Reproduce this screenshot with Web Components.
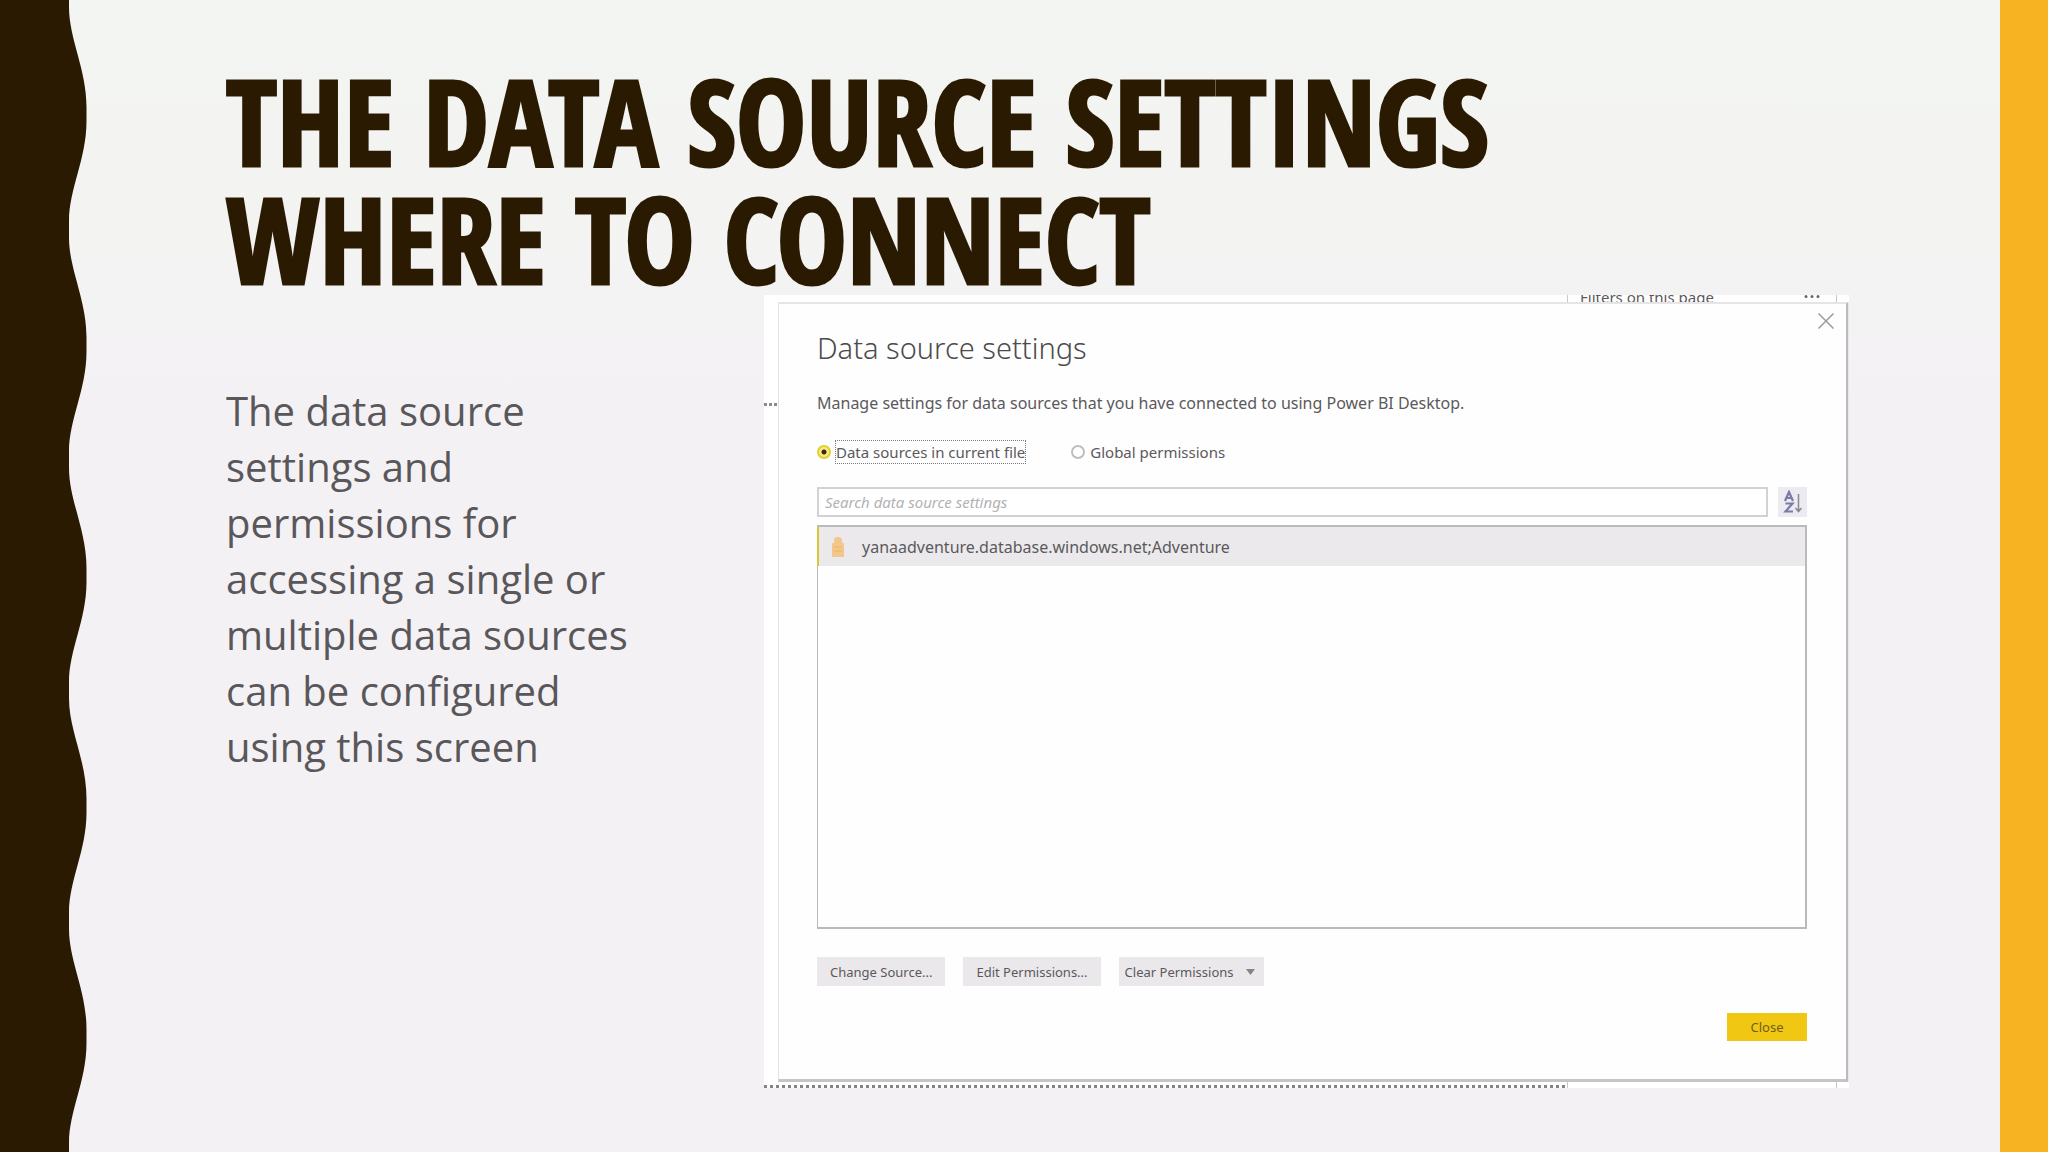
<!DOCTYPE html>
<html lang="en">
<head>
<meta charset="utf-8">
<title>The data source settings</title>
<style>
  body { margin: 0; font-family: "Open Sans", "Noto Sans", sans-serif; }
</style>
</head>
<body>
<slide-page>
  <slide-title slot="title">THE DATA SOURCE SETTINGS<br>WHERE TO CONNECT</slide-title>
  <slide-text slot="text">The data source settings and permissions for accessing a single or multiple data sources can be configured using this screen</slide-text>
  <app-backdrop slot="figure">
    <settings-dialog heading="Data source settings">
      <span slot="description">Manage settings for data sources that you have connected to using Power BI Desktop.</span>
      <scope-choice slot="scope"></scope-choice>
      <source-search slot="search"></source-search>
      <source-list slot="list">
        <source-item>yanaadventure.database.windows.net;Adventure</source-item>
      </source-list>
      <dialog-button slot="actions">Change Source...</dialog-button>
      <dialog-button slot="actions">Edit Permissions...</dialog-button>
      <dialog-select slot="actions" label="Clear Permissions"></dialog-select>
      <dialog-button slot="footer" primary>Close</dialog-button>
    </settings-dialog>
  </app-backdrop>
</slide-page>

<script>
const define = (name, html, setup) => {
  const template = document.createElement('template');
  template.innerHTML = html;
  customElements.define(name, class extends HTMLElement {
    constructor() {
      super();
      this.attachShadow({ mode: 'open' }).append(template.content.cloneNode(true));
    }
    connectedCallback() {
      if (setup) setup(this, this.shadowRoot);
    }
  });
};

define('wave-edge', `
  <style>
    :host { display: block; width: 87px; flex: none; }
    svg { display: block; width: 100%; height: 100%; }
  </style>
  <svg viewBox="0 0 87 1152" preserveAspectRatio="none" aria-hidden="true"><path fill="#2b1a02"/></svg>`,
  (host, root) => {
    const period = 230.5;
    let d = 'M0 0H69';
    for (let y = -1; y < 1152; y += period) {
      d += `L69 ${y + 8}C69 ${y + 40} 86.500 ${y + 70} 86.500 ${y + 108}V${y + 122}C86.500 ${y + 160} 69 ${y + 190} 69 ${y + 222}V${y + period}`;
    }
    root.querySelector('path').setAttribute('d', d + 'H0Z');
  });

define('slide-page', `
  <style>
    :host { display: flex; min-height: 100vh; background: linear-gradient(#f3f5f2, #f3f4f2 18%, #f4f1f5 36%); }
    main { flex: 1; padding: 62px 151px 0 139px; }
    .columns { display: grid; grid-template-columns: 538px 1fr; align-items: start; margin-top: -3px; }
    .bar { width: 48px; flex: none; background: #f8b323; }
  </style>
  <wave-edge></wave-edge>
  <main>
    <slot name="title"></slot>
    <div class="columns"><slot name="text"></slot><slot name="figure"></slot></div>
  </main>
  <div class="bar"></div>`);

define('slide-title', `
  <style>
    :host { display: block; }
    h1 { margin: 0; font: 800 118px/118px "Open Sans Condensed", "Roboto Condensed", "Open Sans", sans-serif; font-variant-ligatures: none; color: #2b1a02; -webkit-text-stroke: 3px #2b1a02; white-space: nowrap; }
  </style>
  <h1><slot></slot></h1>`);

define('slide-text', `
  <style>
    :host { display: block; max-width: 430px; padding-top: 88px; }
    p { margin: 0; font-size: 40px; line-height: 56px; color: #59575a; }
  </style>
  <p><slot></slot></p>`);

define('app-backdrop', `
  <style>
    :host { display: block; background: #fff; font-family: "Noto Sans", "Open Sans", sans-serif; color: #5b595c; }
    .top { display: flex; height: 7px; overflow: hidden; padding: 0 12px 0 803px; }
    .pane { flex: 1; display: flex; justify-content: space-between; border: solid #c9c7ca; border-width: 0 1px; padding: 0 16px 0 12px; }
    .pane span { font-size: 15px; line-height: 20px; margin-top: -8px; }
    .pane svg { flex: none; }
    .middle { display: grid; grid-template-columns: 14px 1fr 1px; }
    .left { padding-top: 101px; }
    .left i { display: block; height: 3px; background: repeating-linear-gradient(90deg, #8b898c 0 3px, transparent 3px 5px); }
    .right { background: #e9e7ea; }
    .bottom { display: flex; height: 6px; align-items: end; padding-right: 12px; }
    .dots { width: 803px; height: 3px; background: repeating-linear-gradient(90deg, #858386 0 3px, transparent 3px 6px); }
    .tail { flex: 1; height: 6px; border: solid #c9c7ca; border-width: 0 1px; }
  </style>
  <div class="top"><div class="pane"><span>Filters on this page</span>
    <svg width="16" height="4" fill="#6b696c" aria-hidden="true"><circle cx="2" cy="1.500" r="1.500"/><circle cx="8" cy="1.500" r="1.500"/><circle cx="14" cy="1.500" r="1.500"/></svg></div></div>
  <div class="middle"><div class="left"><i></i></div><slot></slot><div class="right"></div></div>
  <div class="bottom"><div class="dots"></div><div class="tail"></div></div>`);

define('settings-dialog', `
  <style>
    :host { display: block; background: #fefefe; border: solid; border-width: 2px 2px 3px 1px; border-color: #e6e4e7 #bcbabd #c6c4c7 #e3e1e4; box-sizing: border-box; }
    .titlebar { display: flex; justify-content: flex-end; height: 24px; padding: 9px 12px 0 0; box-sizing: border-box; }
    .x { width: 16px; height: 16px; padding: 0; border: 0; background: none; flex: none; }
    .x svg { display: block; }
    .content { display: flex; flex-direction: column; padding: 0 39px 38px 38px; }
    h2 { margin: 0; font-size: 29px; line-height: 40px; font-weight: 300; color: #4c4a4d; }
    p { margin: 23px 0 25px; font-size: 16px; line-height: 24px; }
    .actions { display: flex; gap: 18px; margin: 28px 0 27px; }
    .footer { display: flex; justify-content: flex-end; }
  </style>
  <div class="titlebar"><button class="x" aria-label="Dismiss"><svg width="16" height="16" viewBox="0 0 16 16" fill="none" stroke="#9c9a9d" stroke-width="1.500" aria-hidden="true"><path d="M.5.5l15 15M15.500.5l-15 15"/></svg></button></div>
  <div class="content">
    <h2></h2>
    <p><slot name="description"></slot></p>
    <slot name="scope"></slot>
    <slot name="search"></slot>
    <slot name="list"></slot>
    <div class="actions"><slot name="actions"></slot></div>
    <div class="footer"><slot name="footer"></slot></div>
  </div>`,
  (host, root) => { root.querySelector('h2').textContent = host.getAttribute('heading'); });

define('scope-choice', `
  <style>
    :host { display: flex; gap: 45px; font-size: 15px; line-height: 22px; margin-bottom: 23px; }
    div { display: flex; align-items: center; gap: 4px; }
    input { appearance: none; width: 14px; height: 14px; margin: 0; border-radius: 50%; border: 2px solid #bfbdc0; background: #fff; }
    input:checked { border: 2px solid #e3d02a; background: radial-gradient(circle, #3a2a10 0 2px, #fbe98a 3px); }
    label { border: 1px solid transparent; }
    input:checked + label { border: 1px dotted #7b797c; }
  </style>
  <div><input type="radio" name="scope" id="file" checked><label for="file">Data sources in current file</label></div>
  <div><input type="radio" name="scope" id="global"><label for="global">Global permissions</label></div>`);

define('source-search', `
  <style>
    :host { display: flex; gap: 10px; height: 30px; margin-bottom: 8px; }
    input { flex: 1; min-width: 0; box-sizing: border-box; border: 2px solid #d3d1d4; background: #fff; padding: 0 6px; font: italic 15px/20px "Noto Sans", "Open Sans", sans-serif; }
    input::placeholder { color: #b3b1b4; opacity: 1; }
    button { width: 29px; padding: 0; border: 0; background: #ebebf1; }
    svg { display: block; margin: auto; }
  </style>
  <input type="search" placeholder="Search data source settings" aria-label="Search data source settings">
  <button aria-label="Sort ascending"><svg width="20" height="24" viewBox="0 0 20 24" fill="none" stroke="#7d7aa6" stroke-width="2.200" aria-hidden="true"><path d="M2 11L6 2l4 9M3.500 8h5M2.500 13.500h7l-7 8h7.500"/><path stroke="#8b898f" stroke-width="1.500" d="M15.500 4v17M12.500 18l3 3.500 3-3.500"/></svg></button>`);

define('source-list', `
  <style>
    :host { display: block; height: 404px; box-sizing: border-box; border: 2px solid #bbb9bc; border-left-width: 1px; background: #fefefe; }
  </style>
  <div role="listbox" aria-label="Data sources"><slot></slot></div>`);

define('source-item', `
  <style>
    :host { display: flex; align-items: center; gap: 17px; height: 39px; padding-left: 12px; background: #ebe9eb; border-left: 2px solid #d9c832; margin-left: -1px; font-size: 16px; line-height: 24px; color: #5b595c; }
    svg { display: block; flex: none; }
  </style>
  <svg width="14" height="22" viewBox="0 0 14 22" fill="#f3c78c" aria-hidden="true"><path d="M1 7H3V4Q3 1 7 1T11 4V7H13V21H1Z"/><path d="M3 11h8M3 15h8" stroke="#efbb78" stroke-width="1.500"/></svg>
  <slot></slot>`,
  host => { host.setAttribute('role', 'option'); host.setAttribute('aria-selected', 'true'); });

define('dialog-button', `
  <style>
    :host { display: block; }
    button { height: 29px; padding: 0 13px; border: 0; background: #eae8eb; color: #5b595c; font: 13px/20px "Noto Sans", "Open Sans", sans-serif; }
    :host([primary]) button { width: 80px; height: 28px; padding: 0; background: #f0c814; color: #6f5f16; }
  </style>
  <button><slot></slot></button>`);

define('dialog-select', `
  <style>
    :host { display: grid; width: 145px; align-items: center; }
    select, svg { grid-area: 1 / 1; }
    select { appearance: none; width: 100%; height: 29px; border: 0; border-radius: 0; padding: 0 6px; background: #eae8eb; color: #5b595c; font: 13px/20px "Noto Sans", "Open Sans", sans-serif; }
    svg { justify-self: end; margin-right: 9px; pointer-events: none; }
  </style>
  <select><option></option></select>
  <svg width="9" height="6" viewBox="0 0 9 6" fill="#858386" aria-hidden="true"><path d="M0 0h9L4.500 6z"/></svg>`,
  (host, root) => {
    const label = host.getAttribute('label');
    root.querySelector('option').textContent = label;
    root.querySelector('select').setAttribute('aria-label', label);
  });
</script>
</body>
</html>
